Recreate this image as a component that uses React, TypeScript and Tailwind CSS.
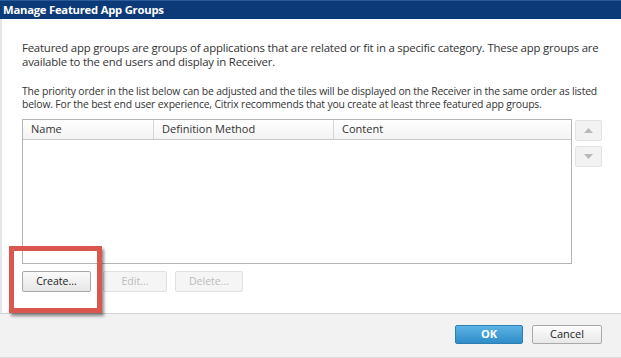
import React from 'react';

const font = { fontFamily: '"Open Sans", "Noto Sans", Arial, sans-serif' };

const App: React.FC = () => {
  return (
    <div className="w-[621px] h-[358px] bg-white flex flex-col overflow-hidden text-[#333]" style={font}>
      {/* title bar */}
      <div className="h-[19px] bg-[#0c3a78] border-t border-[#2a5a98] flex items-center pl-[3px]">
        <span className="text-white font-bold text-[11.3px] leading-none tracking-[-0.25px]">Manage Featured App Groups</span>
      </div>

      {/* body */}
      <div className="relative flex-1 border-l-2 border-[#e6e6e6] pl-[20px] pr-[19px]">
        <p className="mt-[22px] text-[11.4px] leading-[14px] tracking-[-0.2px] whitespace-nowrap">
          Featured app groups are groups of applications that are related or fit in a specific category. These app groups are
          <br />
          available to the end users and display in Receiver.
        </p>
        <p className="mt-[16px] text-[10.4px] leading-[13px] tracking-[-0.17px] whitespace-nowrap">
          The priority order in the list below can be adjusted and the tiles will be displayed on the Receiver in the same order as listed
          <br />
          below. For the best end user experience, Citrix recommends that you create at least three featured app groups.
        </p>

        <div className="mt-[8px] flex gap-[3px]">
          {/* list */}
          <div className="w-[551px] h-[145px] border border-[#b4b4b4] bg-white">
            <div className="h-[20px] flex border-b border-[#c8c8c8] bg-gradient-to-b from-white to-[#f3f3f3] text-[11px]">
              <div className="w-[131px] border-r border-[#d6d6d6] pl-[8px] flex items-center">Name</div>
              <div className="w-[180px] border-r border-[#d6d6d6] pl-[8px] flex items-center">Definition Method</div>
              <div className="flex-1 pl-[8px] flex items-center">Content</div>
            </div>
          </div>

          {/* move up / down */}
          <div className="flex flex-col gap-[5px] pt-[1px]">
            <div className="w-[27px] h-[21px] rounded-[2px] border border-[#e2e2e2] bg-[#f2f2f2] flex items-center justify-center">
              <svg width="9" height="5" viewBox="0 0 9 5"><path d="M0 5 L4.5 0 L9 5 Z" fill="#b9b9b9" /></svg>
            </div>
            <div className="w-[27px] h-[21px] rounded-[2px] border border-[#e2e2e2] bg-[#f2f2f2] flex items-center justify-center">
              <svg width="9" height="5" viewBox="0 0 9 5"><path d="M0 0 L4.5 5 L9 0 Z" fill="#b9b9b9" /></svg>
            </div>
          </div>
        </div>

        {/* action buttons */}
        <div className="mt-[7px] flex text-[10.5px]">
          <button className="w-[69px] h-[21px] rounded-[2px] border border-[#a9a9a9] bg-gradient-to-b from-[#fbfbfb] to-[#e6e6e6] text-[#222]">Create...</button>
          <button className="ml-[12px] w-[64px] h-[21px] rounded-[2px] border border-[#e0e0e0] bg-[#f5f5f5] text-[#bcbcbc]">Edit...</button>
          <button className="ml-[8px] w-[68px] h-[21px] rounded-[2px] border border-[#e0e0e0] bg-[#f5f5f5] text-[#bcbcbc]">Delete...</button>
        </div>

        {/* highlight annotation */}
        <div className="absolute left-[7px] top-[227px] w-[93px] h-[67px] border-[5px] border-[#d9574e] shadow-[2px_3px_3px_rgba(0,0,0,0.45)]" />
      </div>

      {/* footer */}
      <div className="h-[45px] border-t border-[#d2d2d2] border-b border-b-[#dcdcdc] bg-[#f2f2f2] flex items-start justify-end pt-[11px] pr-[19px] gap-[9px] text-[11px]">
        <button className="w-[68px] h-[19px] rounded-[2px] border border-[#2f7fb4] bg-gradient-to-b from-[#5bb3e4] to-[#2f8dc8] text-white font-bold">OK</button>
        <button className="w-[70px] h-[19px] rounded-[2px] border border-[#a9a9a9] bg-gradient-to-b from-[#fdfdfd] to-[#e8e8e8] text-[#222]">Cancel</button>
      </div>
    </div>
  );
};

export default App;
